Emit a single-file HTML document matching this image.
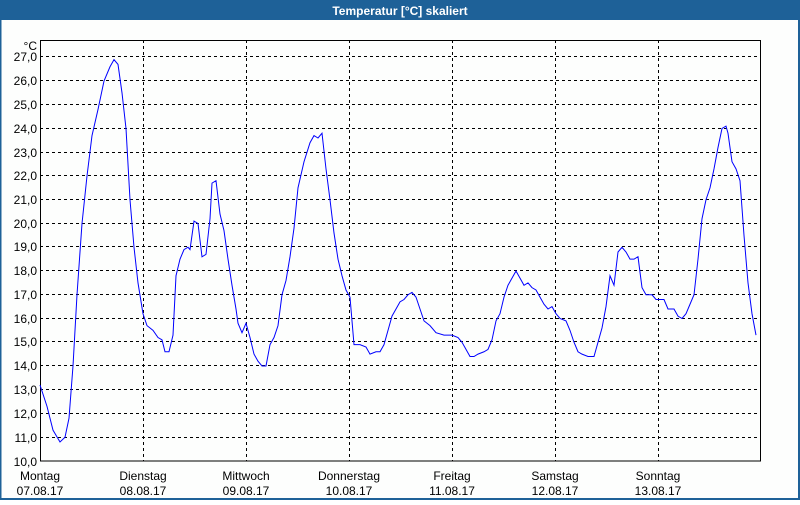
<!DOCTYPE html>
<html><head><meta charset="utf-8"><style>
body{margin:0;width:800px;height:500px;overflow:hidden;background:#fff;font-family:"Liberation Sans",sans-serif}
</style></head><body>
<svg width="800" height="500" xmlns="http://www.w3.org/2000/svg" font-family="Liberation Sans, sans-serif">
<rect x="0" y="0" width="800" height="500" fill="#fdfefd"/>
<rect x="0" y="0" width="800" height="20" fill="#1e6198"/>
<rect x="0" y="0" width="1.5" height="500" fill="#1e6198"/>
<rect x="798" y="0" width="2" height="500" fill="#1e6198"/>
<rect x="0" y="498" width="800" height="2" fill="#1e6198"/>
<text x="400" y="15" fill="#fff" font-size="12" font-weight="bold" text-anchor="middle">Temperatur [°C] skaliert</text>
<g stroke="#000" stroke-width="1" stroke-dasharray="3,3" shape-rendering="crispEdges">
<path d="M40 56.5H760M40 80.5H760M40 104.5H760M40 128.5H760M40 152.5H760M40 175.5H760M40 199.5H760M40 223.5H760M40 246.5H760M40 270.5H760M40 294.5H760M40 318.5H760M40 341.5H760M40 365.5H760M40 389.5H760M40 413.5H760M40 437.5H760"/>
<path d="M143.5 40V461M246.5 40V461M349.5 40V461M452.5 40V461M555.5 40V461M658.5 40V461"/>
</g>
<rect x="40.5" y="40.5" width="720" height="420.5" fill="none" stroke="#000" shape-rendering="crispEdges"/>
<g font-size="12" fill="#000" text-anchor="end">
<text x="37" y="50">°C</text>
<text x="37" y="61">27,0</text><text x="37" y="85">26,0</text><text x="37" y="109">25,0</text><text x="37" y="133">24,0</text><text x="37" y="157">23,0</text><text x="37" y="180">22,0</text><text x="37" y="204">21,0</text><text x="37" y="228">20,0</text><text x="37" y="251">19,0</text><text x="37" y="275">18,0</text><text x="37" y="299">17,0</text><text x="37" y="323">16,0</text><text x="37" y="346">15,0</text><text x="37" y="370">14,0</text><text x="37" y="394">13,0</text><text x="37" y="418">12,0</text><text x="37" y="442">11,0</text><text x="37" y="466">10,0</text>
</g>
<g font-size="12" fill="#000" text-anchor="middle">
<text x="40" y="480">Montag</text><text x="40" y="495">07.08.17</text>
<text x="143" y="480">Dienstag</text><text x="143" y="495">08.08.17</text>
<text x="246" y="480">Mittwoch</text><text x="246" y="495">09.08.17</text>
<text x="349" y="480">Donnerstag</text><text x="349" y="495">10.08.17</text>
<text x="452" y="480">Freitag</text><text x="452" y="495">11.08.17</text>
<text x="555" y="480">Samstag</text><text x="555" y="495">12.08.17</text>
<text x="658" y="480">Sonntag</text><text x="658" y="495">13.08.17</text>
</g>
<g transform="translate(0,461) scale(1,-23.75) translate(0,-10)">
<polyline fill="none" stroke="#0000ff" stroke-width="1" vector-effect="non-scaling-stroke" points="40,13.2 47,12.3 53,11.3 60,10.8 65,11.0 69,11.8 73,14 77,17 82,20 87,22 92,23.7 98,24.8 104,26 110,26.6 114,26.9 118,26.7 122,25.5 126,24 130,21 134,19 138,17.5 143,16.2 147,15.7 153,15.5 158,15.2 162,15.1 165,14.6 169,14.6 173,15.3 176,17.8 180,18.5 184,18.9 188,19.0 190,18.9 194,20.1 198,20.0 202,18.6 206,18.7 210,20.2 212,21.7 216,21.8 220,20.4 224,19.7 228,18.5 232,17.4 236,16.4 238,15.8 242,15.4 246,15.8 250,15.2 254,14.5 258,14.2 262,14.0 266,14.0 270,14.9 274,15.2 278,15.7 282,17.0 286,17.6 290,18.6 294,19.8 298,21.5 304,22.6 310,23.4 314,23.7 318,23.6 322,23.8 326,22.3 330,21 334,19.6 338,18.5 342,17.8 346,17.2 350,16.9 354,14.9 360,14.9 366,14.8 370,14.5 376,14.6 380,14.6 384,14.9 388,15.5 392,16.1 396,16.4 400,16.7 404,16.8 408,17.0 412,17.1 416,16.9 420,16.4 424,15.9 430,15.7 436,15.4 444,15.3 452,15.3 458,15.2 462,15.0 466,14.7 470,14.4 474,14.4 478,14.5 484,14.6 488,14.7 492,15.1 496,15.9 500,16.2 504,16.9 508,17.4 512,17.7 516,18.0 520,17.7 524,17.4 528,17.5 532,17.3 536,17.2 540,16.9 544,16.6 548,16.4 552,16.5 556,16.2 560,16.0 566,15.9 570,15.5 574,15.0 578,14.6 582,14.5 588,14.4 594,14.4 598,15.0 602,15.6 606,16.5 610,17.8 614,17.4 618,18.8 622,19.0 626,18.8 630,18.5 634,18.5 638,18.6 642,17.3 646,17.0 652,17.0 656,16.8 664,16.8 668,16.4 674,16.4 678,16.1 682,16.0 686,16.2 690,16.6 694,17.0 698,18.5 702,20.2 706,21 710,21.5 714,22.3 718,23.2 722,24.0 726,24.1 728,23.8 732,22.6 736,22.3 740,21.8 744,19.5 748,17.5 752,16.2 756,15.3"/>
</g>
</svg>
</body></html>
